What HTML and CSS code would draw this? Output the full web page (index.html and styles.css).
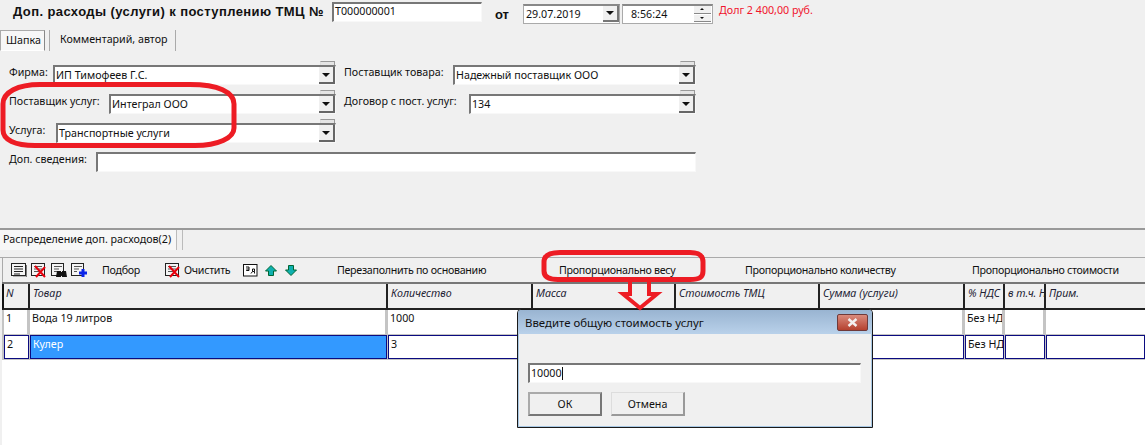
FILE: index.html
```html
<!DOCTYPE html>
<html lang="ru">
<head>
<meta charset="utf-8">
<title>Доп. расходы</title>
<link rel="stylesheet" href="styles.css">
</head>
<body>
<div class="page">
  <header class="head">
    <h1 class="title">Доп. расходы (услуги) к поступлению ТМЦ №</h1>
    <div class="sunken num">Т000000001</div>
    <b class="ot">от</b>
    <div class="pick date"><span class="pick-text">29.07.2019</span><span class="pick-btn"><i class="arrow"></i></span></div>
    <div class="pick time"><span class="pick-text t">8:56:24</span><span class="spin"><i class="up"></i><i class="down"></i></span></div>
    <span class="debt">Долг 2 400,00 руб.</span>
  </header>

  <nav class="tabs">
    <span class="tab active">Шапка</span>
    <span class="sep s1"></span>
    <span class="tab second">Комментарий, автор</span>
    <span class="sep s2"></span>
  </nav>

  <section class="form">
    <div class="col left">
      <div class="row"><label class="lbl">Фирма:</label><div class="combo c1"><span>ИП Тимофеев Г.С.</span><em class="nub"></em><span class="combo-btn"><i class="arrow"></i></span></div></div>
      <div class="row"><label class="lbl">Поставщик услуг:</label><div class="combo c2"><span>Интеграл ООО</span><em class="nub"></em><span class="combo-btn"><i class="arrow"></i></span></div></div>
      <div class="row"><label class="lbl">Услуга:</label><div class="combo c3"><span>Транспортные услуги</span><em class="nub"></em><span class="combo-btn"><i class="arrow"></i></span></div></div>
    </div>
    <div class="col right">
      <div class="row"><label class="lbl">Поставщик товара:</label><div class="combo c4"><span>Надежный поставщик ООО</span><em class="nub"></em><span class="combo-btn"><i class="arrow"></i></span></div></div>
      <div class="row"><label class="lbl">Договор с пост. услуг:</label><div class="combo c5"><span>134</span><em class="nub"></em><span class="combo-btn"><i class="arrow"></i></span></div></div>
    </div>
  </section>
  <div class="row extra"><label class="lbl">Доп. сведения:</label><div class="sunken info"></div></div>

  <section class="lower">
    <div class="lower-tabs">
      <span class="ltab">Распределение доп. расходов(2)</span>
    </div>
    <div class="panel">
      <div class="toolbar">
        <svg class="ic i1" width="16" height="14" viewBox="0 0 16 14"><rect x=".5" y=".5" width="14" height="12" fill="#f4f4f4" stroke="#222"/><path d="M3 3.500h9M3 6h9M3 8.500h9M3 11h6" stroke="#222"/><path d="M15.500 2v12H2" fill="none" stroke="#777"/></svg>
        <svg class="ic i2" width="16" height="15" viewBox="0 0 16 15"><rect x=".5" y=".5" width="13" height="12" fill="#f4f4f4" stroke="#222"/><path d="M3 3.500h8M3 6h8M3 8.500h8" stroke="#555"/><path d="M4 3l10 11M14 4L5 14" stroke="#e8000c" stroke-width="2"/></svg>
        <svg class="ic i3" width="16" height="15" viewBox="0 0 16 15"><rect x=".5" y=".5" width="12" height="12" fill="#f4f4f4" stroke="#222"/><path d="M3 3.500h8M3 6h5M3 8.500h3" stroke="#555"/><path d="M6 8h4v6H5zM11 8h4l1 6h-5z" fill="#111"/><rect x="9" y="9" width="3" height="3" fill="#111"/></svg>
        <svg class="ic i4" width="16" height="15" viewBox="0 0 16 15"><rect x=".5" y=".5" width="12" height="12" fill="#f4f4f4" stroke="#222"/><path d="M3 3.500h8M3 6h5M3 8.500h3" stroke="#555"/><path d="M8 8.500h8V11.500H8zM10.500 6h3v8h-3z" fill="#0a24e8"/></svg>
        <span class="tool podbor">Подбор</span>
        <svg class="ic i5" width="16" height="15" viewBox="0 0 16 15"><rect x=".5" y=".5" width="13" height="12" fill="#f4f4f4" stroke="#222"/><path d="M3 3.500h8M3 6h8M3 8.500h8" stroke="#555"/><path d="M4 3l10 11M14 4L5 14" stroke="#e8000c" stroke-width="2"/></svg>
        <span class="tool clear">Очистить</span>
        <svg class="ic i6" width="15" height="13" viewBox="0 0 15 13"><rect x=".5" y=".5" width="13.500" height="11.500" fill="#fff" stroke="#111"/><path d="M3 3h3v3.500H3.200M3.200 5h2.800M8 9.500l1.500-2h2V5H9.500v2.500M11.500 7.500v2" fill="none" stroke="#111"/></svg>
        <svg class="ic i7" width="12" height="11" viewBox="0 0 12 11"><path d="M6 .5L11.500 6H8.500V10.500H3.500V6H.5z" fill="#0eb0b0" stroke="#063"/></svg>
        <svg class="ic i8" width="12" height="11" viewBox="0 0 12 11"><path d="M6 10.500L11.500 5H8.500V.5H3.500V5H.5z" fill="#0eb0b0" stroke="#063"/></svg>
        <span class="tool t1">Перезаполнить по основанию</span>
        <span class="tool t2">Пропорционально весу</span>
        <span class="tool t3">Пропорционально количеству</span>
        <span class="tool t4">Пропорционально стоимости</span>
      </div>
      <div class="grid">
        <div class="hc first">N</div><div class="hc">Товар</div><div class="hc">Количество</div><div class="hc">Масса</div><div class="hc">Стоимость ТМЦ</div><div class="hc">Сумма (услуги)</div><div class="hc">% НДС</div><div class="hc">в т.ч. НДС</div><div class="hc last">Прим.</div>

        <div class="cell first">1</div><div class="cell wide">Вода 19 литров</div><div class="cell">1000</div><div class="cell"></div><div class="cell"></div><div class="cell"></div><div class="cell">Без НДС</div><div class="cell"></div><div class="cell last"></div>

        <div class="cell sel first">2</div><div class="cell sel hi wide">Кулер</div><div class="cell sel">3</div><div class="cell sel"></div><div class="cell sel"></div><div class="cell sel"></div><div class="cell sel">Без НДС</div><div class="cell sel"></div><div class="cell sel last"></div>
      </div>
    </div>
  </section>

  <div class="dialog">
    <div class="dlg-title"><span>Введите общую стоимость услуг</span><span class="close"><svg width="13" height="9" viewBox="0 0 13 9"><path d="M2.500 1l8 7M10.500 1l-8 7" stroke="#f4f0f0" stroke-width="2.400"/></svg></span></div>
    <div class="dlg-body">
      <div class="sunken dlg-input"><span>10000</span><i class="caret"></i></div>
      <div class="dlg-btns"><button class="btn ok">ОК</button><button class="btn">Отмена</button></div>
    </div>
  </div>

  <svg class="marks" width="1145" height="445" viewBox="0 0 1145 445">
    <path d="M3 104C3 92 18 84.500 40 84.500L190 84.500C218 84.500 234 92 234 104L234 128C234 138 218 145.500 195 145.500L35 145.500C15 145.500 3 140 3 130Z" fill="none" stroke="#ed1c24" stroke-width="5"/>
    <path d="M544 262C544 255 550 252.500 560 252.500L690 252.500C700 252.500 703 256 703 262L703 271C703 277 700 279.500 690 279.500L558 279.500C549 279.500 544 277 544 271Z" fill="none" stroke="#ed1c24" stroke-width="5"/>
    <path d="M630 281V294H623L640 308L657 294H649V281" fill="none" stroke="#ed1c24" stroke-width="4"/>
  </svg>
</div>
</body>
</html>
```

FILE: styles.css
```css
* { box-sizing: border-box; }
html, body { margin: 0; padding: 0; }
body { background: #f0f0f0; font: 10.7px "Noto Sans", "Liberation Sans", sans-serif; color: #111; }
.page { position: relative; width: 1145px; height: 445px; overflow: hidden; }

.head { display: flex; height: 28px; padding-top: 2px; }
.title { margin: 0 0 0 13px; width: 319px; font: bold 13px/20px "Liberation Sans", sans-serif; letter-spacing: .4px; white-space: nowrap; }
.sunken { background: #fff; border: 1px solid #f8f8f8; border-top: 2px solid #777; border-left: 2px solid #777; }
.num { width: 150px; height: 20px; padding-left: 1px; line-height: 15px; }
.ot { margin: 5px 0 0 13px; width: 28px; font: bold 13px/16px "Liberation Sans", sans-serif; }
.pick { display: flex; align-items: center; height: 20px; margin-top: 2px; padding-bottom: 1px; background: #fff; border: 1px solid #aaa; border-top: 2px solid #888; }
.date { width: 97px; }
.time { width: 91px; margin-left: 2px; }
.pick-text { flex: 1; padding-left: 2px; }
.pick-text.t { padding-left: 8px; }
.pick-btn { display: flex; align-items: center; justify-content: center; width: 16px; height: 16px; background: #f0f0f0; border-right: 2px solid #777; border-bottom: 2px solid #777; }
.spin { display: flex; flex-direction: column; gap: 1px; width: 17px; height: 16px; margin-right: 1px; }
.spin i { flex: 1; background: #f0f0f0; border-bottom: 1px solid #888; position: relative; }
.up::after, .down::after { content: ""; position: absolute; left: 6px; top: 2px; border: 2px solid transparent; }
.up::after { border-bottom-color: #111; border-top: 0; }
.down::after { border-top-color: #111; border-bottom: 0; }
.arrow { display: block; width: 0; height: 0; border: 4px solid transparent; border-top: 4px solid #111; border-bottom: 0; }
.debt { margin: 1px 0 0 6px; color: #f0142d; line-height: 15px; }

.tabs { display: flex; align-items: stretch; height: 21px; margin-top: 2px; }
.tab { line-height: 18px; }
.tab.active { width: 45px; padding-left: 5px; background: #f7f7f7; border: 1px solid #aaa; border-bottom-color: #fff; border-right-color: #888; }
.sep { width: 1px; background: #aaa; }
.s1 { margin-left: 4px; }
.second { margin-left: 10px; width: 115px; }

.form { display: flex; margin-top: 14px; }
.col { display: flex; flex-direction: column; gap: 9px; }
.left { width: 336px; padding-left: 9px; }
.right { margin-left: 8px; width: 352px; }
.row { display: flex; justify-content: space-between; height: 20px; }
.lbl { line-height: 14px; white-space: nowrap; }
.combo { position: relative; display: flex; align-items: center; height: 20px; padding: 0 0 1px 1px; background: #fff; border: 1px solid #f8f8f8; border-top: 2px solid #777; border-left: 2px solid #777; }
.combo-btn { position: absolute; right: 0; top: 0; display: flex; align-items: center; justify-content: center; width: 16px; height: 17px; background: #f0f0f0; border-right: 2px solid #666; border-bottom: 2px solid #666; }
.nub { position: absolute; right: 0; top: -6px; width: 15px; height: 4px; background: #e4e4e4; border-top: 1px solid #999; border-left: 1px solid #ddd; border-right: 1px solid #999; }
.c1 { width: 283px; }
.c2 { width: 227px; }
.c3 { width: 280px; }
.c4 { width: 243px; }
.c5 { width: 227px; }
.extra { width: 687px; margin: 9px 0 0 9px; }
.info { width: 600px; height: 20px; }

.lower { margin-top: 56px; border-top: 2px solid #999; }
.lower-tabs { display: flex; height: 20px; }
.ltab { width: 177px; padding-left: 3px; line-height: 19px; background: #f7f7f7; border-right: 1px solid #bbb; white-space: nowrap; }
.lower-tabs::after { content: ""; width: 1px; margin-left: 5px; background: #bbb; }
.panel { margin-top: 7px; padding-left: 2px; border-top: 1px solid #aaa; }
.toolbar { display: flex; align-items: center; height: 24px; padding-left: 8px; background: #f0f0f0; border-left: 1px solid #aaa; letter-spacing: -.3px; }
.ic { flex: none; margin-right: 4px; }
.tool { white-space: nowrap; }
.podbor { margin-left: 11px; width: 50px; }
.i5 { margin-left: 13px; margin-right: 3px; }
.clear { width: 54px; }
.i6 { margin-left: 5px; margin-right: 7px; }
.i7 { margin-right: 8px; }
.t1 { margin-left: 36px; width: 222px; }
.t2 { width: 186px; }
.t3 { width: 227px; }
.t4 { width: 148px; }

.grid { position: relative; display: grid; grid-template-columns: 28px 358px 145px 143px 144px 145px 40px 41px 99px; grid-template-rows: 26px 25px 25px; height: 163px; background: #c4c4c4; border-top: 2px solid #777; }
.grid::after { content: ""; position: absolute; left: 0; right: 0; top: 76px; bottom: 0; background: #fff; }
.hc { padding: 2px 0 0 3px; font-style: italic; color: #223; background: #f0f0f0; border-right: 2px solid #222; border-bottom: 2px solid #222; white-space: nowrap; overflow: hidden; }
.hc.first { border-left: 2px solid #111; padding-left: 2px; }
.hc.last { border-right: 0; }
.cell { padding: 1px 0 0 2px; margin-right: 3px; margin-bottom: 1px; background: #fff; white-space: nowrap; overflow: hidden; }
.cell.first { margin-left: 2px; }
.cell.last { margin-right: 0; }
.sel { border: 1px solid #0b0b80; margin-right: 1px; padding-top: 1px; }
.hi { background: #3399ff; color: #fff; }

.dialog { position: absolute; left: 517px; top: 309px; width: 356px; height: 119px; background: #f0f0f0; border: 1px solid #1a1a1a; border-radius: 4px 4px 0 0; box-shadow: inset 0 0 0 1px #a8c8e4; }
.dlg-title { display: flex; justify-content: space-between; height: 24px; padding: 5px 4px 0 7px; font-size: 11.4px; line-height: 16px; background: linear-gradient(#99b4d1, #b9d1ea); border-radius: 3px 3px 0 0; }
.close { display: flex; align-items: center; justify-content: center; width: 31px; height: 17px; margin-top: -1px; background: linear-gradient(#d98a7c, #b5412f); border: 1px solid #6f3a3a; border-radius: 2px; }
.dlg-body { padding: 29px 11px 0 10px; }
.dlg-input { display: flex; align-items: center; height: 20px; width: 333px; padding: 0 0 1px 1px; }
.caret { width: 1px; height: 13px; background: #111; }
.dlg-btns { display: flex; gap: 9px; margin-top: 9px; }
.btn { width: 74px; height: 24px; padding: 0; font: inherit; color: #111; background: #f0f0f0; border: 1px solid #ddd; border-right: 2px solid #999; border-bottom: 2px solid #999; }
.ok { border: 2px solid #777; border-top-color: #aaa; border-left-color: #aaa; }

.marks { position: absolute; left: 0; top: 0; pointer-events: none; }
```
